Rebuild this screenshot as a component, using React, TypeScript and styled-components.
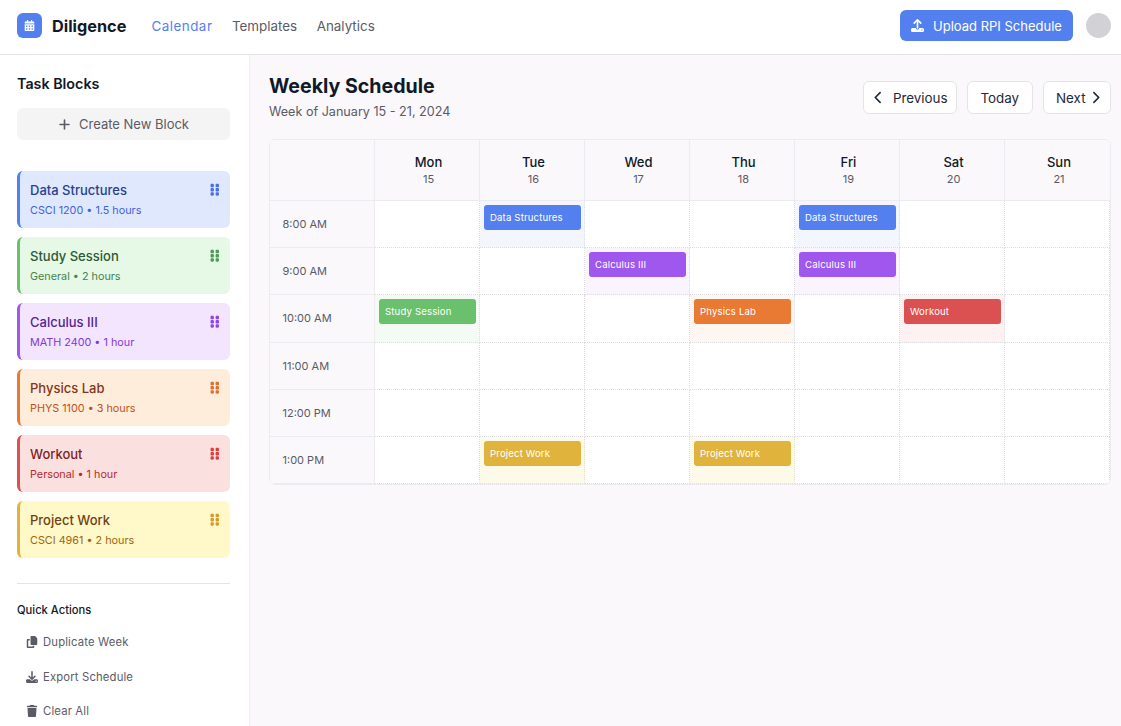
import React from 'react';
import styled, { createGlobalStyle } from 'styled-components';
import {
  FaCalendarDays,
  FaChevronLeft,
  FaChevronRight,
  FaCopy,
  FaDownload,
  FaGripVertical,
  FaPlus,
  FaTrash,
  FaUpload,
} from 'react-icons/fa6';

const GlobalStyle = createGlobalStyle`
  html, body {
    margin: 0;
    padding: 0;
    height: 100%;
    overflow: hidden;
    background: #fff;
    font-family: Inter, "Noto Sans", sans-serif;
    color: #111827;
  }
  * { box-sizing: border-box; }
`;

type Tone = {
  main: string;
  bg: string;
  title: string;
  sub: string;
  grip: string;
  tint: string;
};

const tones: Record<string, Tone> = {
  blue: { main: '#5480ef', bg: '#dfe8fc', title: '#2a3f8f', sub: '#3f63df', grip: '#4a70e6', tint: '#f4f6fe' },
  green: { main: '#6bc06d', bg: '#e6f8e6', title: '#2b5a35', sub: '#47824f', grip: '#4f9a58', tint: '#f4faf4' },
  purple: { main: '#9f57ee', bg: '#f2e5fd', title: '#57238f', sub: '#8438d8', grip: '#8f45e6', tint: '#faf4ff' },
  orange: { main: '#e87a33', bg: '#ffeddb', title: '#86341a', sub: '#c2501c', grip: '#e07030', tint: '#fef6f0' },
  red: { main: '#db5050', bg: '#fbe0e0', title: '#7f1f1f', sub: '#b92a2a', grip: '#d84040', tint: '#fdf1f1' },
  yellow: { main: '#e0b43c', bg: '#fff8c8', title: '#714112', sub: '#a2650f', grip: '#d49a30', tint: '#fefaea' },
};

const Page = styled.div`
  width: 1121px;
  height: 726px;
  display: flex;
  flex-direction: column;
  overflow: hidden;
`;

const Header = styled.header`
  height: 55px;
  flex: none;
  display: flex;
  align-items: center;
  justify-content: space-between;
  padding: 0 10px 3px 17px;
  background: #fff;
  border-bottom: 1px solid #e4e4e7;
`;

const HeaderSide = styled.div`
  display: flex;
  align-items: center;
`;

const Logo = styled.div`
  width: 25px;
  height: 25px;
  border-radius: 6px;
  background: #5480ef;
  color: #fff;
  display: flex;
  align-items: center;
  justify-content: center;
  font-size: 11px;
`;

const Brand = styled.div`
  margin-left: 10px;
  font-size: 16.3px;
  font-weight: 700;
  color: #111827;
`;

const Nav = styled.nav`
  display: flex;
  gap: 19.5px;
  margin-left: 25px;
`;

const NavLink = styled.a<{ $active?: boolean }>`
  font-size: 13.4px;
  letter-spacing: ${(props) => (props.$active ? '0.5px' : '0')};
  color: ${(props) => (props.$active ? '#5480ef' : '#5b5b66')};
`;

const UploadButton = styled.button`
  width: 173px;
  height: 31px;
  border: none;
  border-radius: 6px;
  background: #5480ef;
  color: #fff;
  font: inherit;
  font-size: 13px;
  display: flex;
  align-items: center;
  justify-content: center;
  gap: 9px;
  svg {
    font-size: 13px;
  }
`;

const Avatar = styled.div`
  width: 25px;
  height: 25px;
  border-radius: 50%;
  background: #d1d1d6;
  margin-left: 13px;
`;

const Body = styled.div`
  flex: 1;
  display: flex;
  min-height: 0;
`;

const Sidebar = styled.aside`
  width: 250px;
  flex: none;
  padding: 19px 19px 0 17px;
  background: #fff;
  border-right: 1px solid #f0f0f3;
  overflow: hidden;
`;

const SideTitle = styled.h2`
  margin: 0;
  font-size: 14.3px;
  line-height: 20px;
  font-weight: 600;
  color: #111827;
`;

const CreateButton = styled.button`
  width: 100%;
  height: 32px;
  margin-top: 14px;
  border: none;
  border-radius: 6px;
  background: #f4f4f5;
  color: #5b5b66;
  font: inherit;
  font-size: 13px;
  display: flex;
  align-items: center;
  justify-content: center;
  gap: 8px;
`;

const BlockList = styled.div`
  margin-top: 31px;
  display: flex;
  flex-direction: column;
  gap: 9px;
`;

const Block = styled.div<{ $tone: Tone }>`
  height: 57px;
  border-radius: 6px;
  border-left: 3px solid ${(props) => props.$tone.main};
  background: ${(props) => props.$tone.bg};
  padding: 10px 9px 0 10px;
  display: flex;
  justify-content: space-between;
`;

const BlockTitle = styled.div<{ $tone: Tone }>`
  font-size: 13px;
  line-height: 18px;
  font-weight: 500;
  color: ${(props) => props.$tone.title};
`;

const BlockSub = styled.div<{ $tone: Tone }>`
  margin-top: 4px;
  font-size: 10.8px;
  line-height: 16px;
  color: ${(props) => props.$tone.sub};
`;

const Grip = styled.div<{ $tone: Tone }>`
  color: ${(props) => props.$tone.grip};
  font-size: 13.5px;
  line-height: 13.5px;
  margin-top: 2px;
`;

const Divider = styled.hr`
  margin: 25px 0 0;
  border: none;
  border-top: 1px solid #e4e4e7;
`;

const QuickTitle = styled.h3`
  margin: 18px 0 0;
  font-size: 11.2px;
  line-height: 16px;
  font-weight: 500;
  color: #111827;
`;

const QuickList = styled.div`
  margin-top: 7px;
  padding-left: 9px;
  display: flex;
  flex-direction: column;
`;

const QuickItem = styled.div`
  height: 34.5px;
  display: flex;
  align-items: center;
  gap: 5px;
  font-size: 11.3px;
  letter-spacing: 0.15px;
  color: #5b5b66;
  svg {
    font-size: 12px;
  }
`;

const Main = styled.main`
  flex: 1;
  min-width: 0;
  background: #faf8fa;
  padding: 19px 10px 0 19px;
`;

const TopRow = styled.div`
  display: flex;
  justify-content: space-between;
  align-items: flex-start;
`;

const Title = styled.h1`
  margin: 0;
  font-size: 19.6px;
  line-height: 24px;
  font-weight: 700;
  color: #111827;
`;

const Subtitle = styled.p`
  margin: 6px 0 0;
  font-size: 12.6px;
  line-height: 16px;
  color: #5b5b66;
`;

const Pager = styled.div`
  margin-top: 7px;
  display: flex;
  gap: 10px;
`;

const PagerButton = styled.button<{ $w: number; $gap?: number; $pad?: number }>`
  width: ${(props) => props.$w}px;
  height: 33px;
  border: 1px solid #e4e4e7;
  border-radius: 6px;
  background: #fff;
  color: #1f2937;
  font: inherit;
  font-size: 13.4px;
  padding: 0 0 0 ${(props) => props.$pad ?? 0}px;
  display: flex;
  align-items: center;
  justify-content: center;
  gap: ${(props) => props.$gap ?? 0}px;
  svg {
    font-size: 13px;
  }
`;

const Table = styled.div`
  margin-top: 19px;
  border: 1px solid #ececf0;
  border-radius: 6px;
  overflow: hidden;
  background: #fff;
  display: grid;
  grid-template-columns: 105px repeat(7, 1fr);
  grid-template-rows: 61px repeat(6, 47.2px);
`;

const Corner = styled.div`
  background: #faf8fa;
  border-right: 1px solid #ececf0;
  border-bottom: 1px solid #ececf0;
`;

const DayHead = styled.div`
  background: #faf8fa;
  border-right: 1px solid #ececf0;
  border-bottom: 1px solid #ececf0;
  padding-left: 3px;
  display: flex;
  flex-direction: column;
  align-items: center;
  justify-content: center;
  &:nth-child(8) {
    border-right: none;
  }
`;

const DayName = styled.div`
  font-size: 13px;
  line-height: 18px;
  font-weight: 500;
  color: #111827;
`;

const DayNum = styled.div`
  font-size: 11px;
  line-height: 16px;
  color: #5b5b66;
`;

const TimeCell = styled.div`
  background: #faf8fa;
  border-right: 1px solid #ececf0;
  border-bottom: 1px solid #ececf0;
  padding-left: 12.5px;
  display: flex;
  align-items: center;
  font-size: 11px;
  color: #5b5b66;
`;

const Cell = styled.div<{ $tint?: string }>`
  background: ${(props) => props.$tint ?? '#fff'};
  border-right: 1px dotted #dcdce2;
  border-bottom: 1px dotted #dcdce2;
  padding: 4px 3.5px 0 4px;
`;

const Event = styled.div<{ $color: string }>`
  height: 25px;
  border-radius: 3px;
  background: ${(props) => props.$color};
  color: #fff;
  font-size: 9.6px;
  letter-spacing: 0.15px;
  padding-left: 6px;
  display: flex;
  align-items: center;
`;

const blocks = [
  { name: 'Data Structures', sub: 'CSCI 1200 • 1.5 hours', tone: tones.blue },
  { name: 'Study Session', sub: 'General • 2 hours', tone: tones.green },
  { name: 'Calculus III', sub: 'MATH 2400 • 1 hour', tone: tones.purple },
  { name: 'Physics Lab', sub: 'PHYS 1100 • 3 hours', tone: tones.orange },
  { name: 'Workout', sub: 'Personal • 1 hour', tone: tones.red },
  { name: 'Project Work', sub: 'CSCI 4961 • 2 hours', tone: tones.yellow },
];

const days = [
  ['Mon', '15'],
  ['Tue', '16'],
  ['Wed', '17'],
  ['Thu', '18'],
  ['Fri', '19'],
  ['Sat', '20'],
  ['Sun', '21'],
];

const times = ['8:00 AM', '9:00 AM', '10:00 AM', '11:00 AM', '12:00 PM', '1:00 PM'];

// keyed by "row-day"
const events: Record<string, { label: string; tone: Tone }> = {
  '0-1': { label: 'Data Structures', tone: tones.blue },
  '0-4': { label: 'Data Structures', tone: tones.blue },
  '1-2': { label: 'Calculus III', tone: tones.purple },
  '1-4': { label: 'Calculus III', tone: tones.purple },
  '2-0': { label: 'Study Session', tone: tones.green },
  '2-3': { label: 'Physics Lab', tone: tones.orange },
  '2-5': { label: 'Workout', tone: tones.red },
  '5-1': { label: 'Project Work', tone: tones.yellow },
  '5-3': { label: 'Project Work', tone: tones.yellow },
};

export default function App() {
  return (
    <Page>
      <GlobalStyle />
      <Header>
        <HeaderSide>
          <Logo>
            <FaCalendarDays />
          </Logo>
          <Brand>Diligence</Brand>
          <Nav>
            <NavLink $active>Calendar</NavLink>
            <NavLink>Templates</NavLink>
            <NavLink>Analytics</NavLink>
          </Nav>
        </HeaderSide>
        <HeaderSide>
          <UploadButton>
            <FaUpload />
            Upload RPI Schedule
          </UploadButton>
          <Avatar />
        </HeaderSide>
      </Header>
      <Body>
        <Sidebar>
          <SideTitle>Task Blocks</SideTitle>
          <CreateButton>
            <FaPlus />
            Create New Block
          </CreateButton>
          <BlockList>
            {blocks.map((block) => (
              <Block key={block.name} $tone={block.tone}>
                <div>
                  <BlockTitle $tone={block.tone}>{block.name}</BlockTitle>
                  <BlockSub $tone={block.tone}>{block.sub}</BlockSub>
                </div>
                <Grip $tone={block.tone}>
                  <FaGripVertical />
                </Grip>
              </Block>
            ))}
          </BlockList>
          <Divider />
          <QuickTitle>Quick Actions</QuickTitle>
          <QuickList>
            <QuickItem>
              <FaCopy />
              Duplicate Week
            </QuickItem>
            <QuickItem>
              <FaDownload />
              Export Schedule
            </QuickItem>
            <QuickItem>
              <FaTrash />
              Clear All
            </QuickItem>
          </QuickList>
        </Sidebar>
        <Main>
          <TopRow>
            <div>
              <Title>Weekly Schedule</Title>
              <Subtitle>Week of January 15 - 21, 2024</Subtitle>
            </div>
            <Pager>
              <PagerButton $w={94.5} $gap={8}>
                <FaChevronLeft />
                Previous
              </PagerButton>
              <PagerButton $w={65.5}>Today</PagerButton>
              <PagerButton $w={68.5} $gap={3} $pad={4}>
                Next
                <FaChevronRight />
              </PagerButton>
            </Pager>
          </TopRow>
          <Table>
            <Corner />
            {days.map(([name, num]) => (
              <DayHead key={name}>
                <DayName>{name}</DayName>
                <DayNum>{num}</DayNum>
              </DayHead>
            ))}
            {times.map((time, row) => (
              <React.Fragment key={time}>
                <TimeCell>{time}</TimeCell>
                {days.map(([name], day) => {
                  const event = events[`${row}-${day}`];
                  return (
                    <Cell key={name} $tint={event?.tone.tint}>
                      {event && <Event $color={event.tone.main}>{event.label}</Event>}
                    </Cell>
                  );
                })}
              </React.Fragment>
            ))}
          </Table>
        </Main>
      </Body>
    </Page>
  );
}
